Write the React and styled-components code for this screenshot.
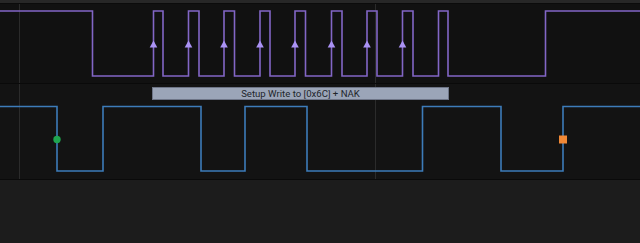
import React from 'react'
import styled, { createGlobalStyle } from 'styled-components'

const GlobalStyle = createGlobalStyle`
  html, body {
    margin: 0;
    padding: 0;
    background: #1c1c1c;
    font-family: Roboto, "Liberation Sans", sans-serif;
  }
`

const Screen = styled.div`
  width: 640px;
  height: 243px;
  display: flex;
  flex-direction: column;
  background: #1c1c1c;
  overflow: hidden;
`

const TopStrip = styled.div`
  height: 3px;
  background: #272727;
  border-bottom: 1px solid #0b0b0b;
`

const Lane = styled.div`
  position: relative;
  height: ${p => p.h}px;
  background: ${p => p.bg};
  border-bottom: 1px solid #0a0a0a;
`

const Wave = styled.svg`
  display: block;
  width: 640px;
  height: 100%;
`

const Bubble = styled.div`
  position: absolute;
  box-sizing: border-box;
  top: 3px;
  left: 152px;
  width: 297px;
  height: 13px;
  background: #9ba5b8;
  border: 1px solid #6e7587;
  color: #22252b;
  font-size: 9.6px;
  line-height: 11px;
  text-align: center;
  white-space: nowrap;
`

const Filler = styled.div`
  flex: 1;
  background: #1c1c1c;
`

const GRID = [19.5, 375.5]

// edge pairs (rise, fall) for the purple channel
const PURPLE = [
  [153.5, 163], [188.5, 199], [224, 234.5], [260, 270], [295, 305.5],
  [331.5, 342], [367, 377], [402.5, 413], [438.5, 448]
]

function purplePath() {
  const hi = 7
  const lo = 72
  let d = `M0 ${hi} H92.5 V${lo}`
  PURPLE.forEach(([r, f]) => {
    d += ` H${r} V${hi} H${f} V${lo}`
  })
  d += ` H545.5 V${hi} H640`
  return d
}

const BLUE = [[57, 103], [201, 245], [307, 422.5], [501, 563]]

function bluePath() {
  const hi = 22.5
  const lo = 87
  let d = `M0 ${hi}`
  BLUE.forEach(([f, r]) => {
    d += ` H${f} V${lo} H${r} V${hi}`
  })
  d += ' H640'
  return d
}

function Grid({ h }) {
  return GRID.map(x => (
    <line key={x} x1={x} x2={x} y1={0} y2={h} stroke="#2b2b2b" strokeWidth="1" />
  ))
}

export default function App() {
  return (
    <Screen>
      <GlobalStyle />
      <TopStrip />
      <Lane h={79} bg="#111111">
        <Wave viewBox="0 0 640 79">
          <Grid h={79} />
          <path d={purplePath()} fill="none" stroke="#8266c6" strokeWidth="1.6" />
          {PURPLE.slice(0, 8).map(([r]) => (
            <polygon
              key={r}
              points={`${r},36.5 ${r - 3.8},43.6 ${r + 3.8},43.6`}
              fill="#aa92f4"
            />
          ))}
        </Wave>
      </Lane>
      <Lane h={95} bg="#131313">
        <Wave viewBox="0 0 640 95">
          <Grid h={95} />
          <path d={bluePath()} fill="none" stroke="#3d7cba" strokeWidth="1.6" />
          <circle cx="57" cy="55.5" r="3.7" fill="#1ea54f" />
          <rect x="559" y="51.5" width="8" height="8" fill="#f08836" />
        </Wave>
        <Bubble>Setup Write to [0x6C] + NAK</Bubble>
      </Lane>
      <Filler />
    </Screen>
  )
}
